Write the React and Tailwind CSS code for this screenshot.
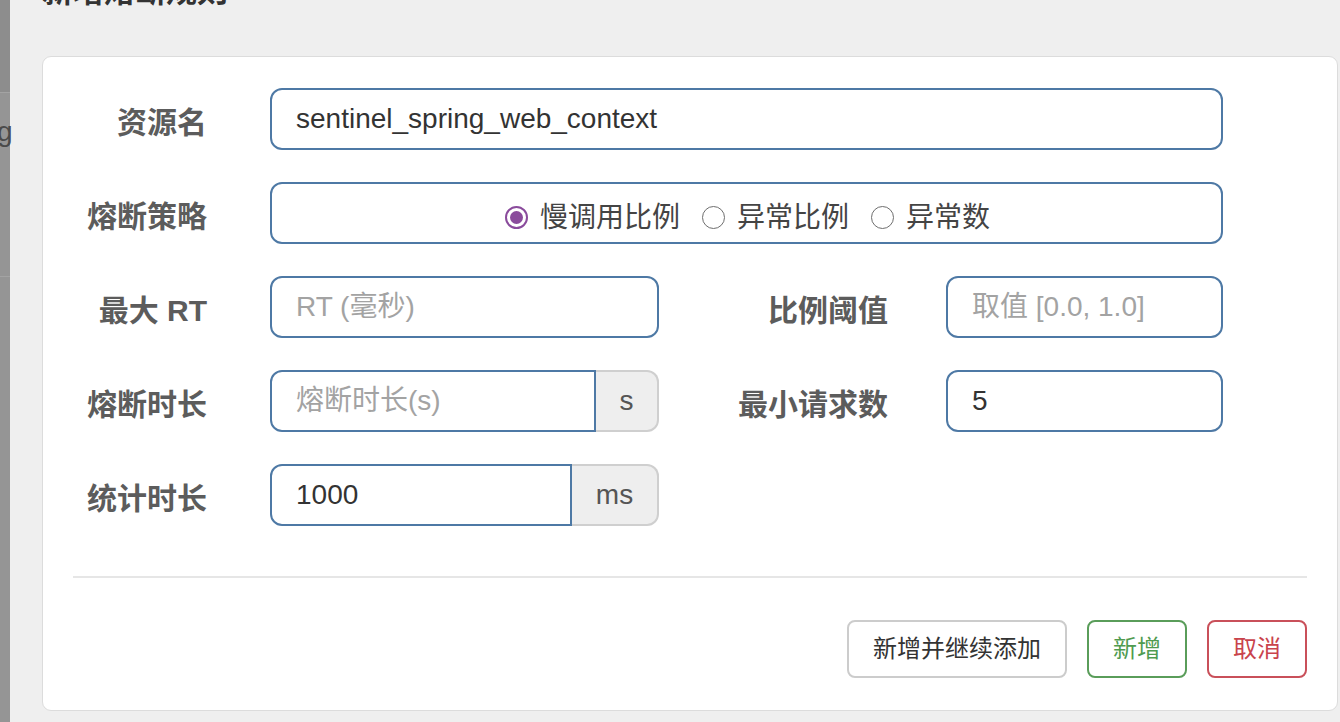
import { useState } from 'react';

const FONT = "font-['Liberation_Sans','Noto_Sans_CJK_SC',sans-serif]";

function Label({ children, className = '' }) {
  return (
    <div className={`pt-[8px] text-right text-[30px] font-bold leading-none text-[#5c5c5c] ${className}`}>
      {children}
    </div>
  );
}

function TextInput({ placeholder, value, className = '', addon, addonWidth = '' }) {
  if (addon) {
    return (
      <div className={`flex h-[62px] ${className}`}>
        <input
          defaultValue={value}
          placeholder={placeholder}
          className="h-full min-w-0 flex-1 rounded-l-[12px] border-2 border-[#4e79a5] bg-white pl-[24px] text-[28px] text-[#333] outline-none placeholder:text-[#a3a3a3]"
        />
        <div className={`flex h-full items-center justify-center rounded-r-[12px] border-2 border-l-0 border-[#cfcfcf] bg-[#eeeeee] text-[28px] text-[#555] ${addonWidth}`}>
          {addon}
        </div>
      </div>
    );
  }
  return (
    <input
      defaultValue={value}
      placeholder={placeholder}
      className={`h-[62px] rounded-[12px] border-2 border-[#4e79a5] bg-white pl-[24px] text-[28px] text-[#333] outline-none placeholder:text-[#a3a3a3] ${className}`}
    />
  );
}

function Radio({ checked, label, onClick }) {
  return (
    <label className="flex cursor-pointer items-center gap-[12px]" onClick={onClick}>
      {checked ? (
        <span className="flex h-[23px] w-[23px] items-center justify-center rounded-full border-2 border-[#8a4b9c] bg-white">
          <span className="h-[13px] w-[13px] rounded-full bg-[#8a4b9c]" />
        </span>
      ) : (
        <span className="h-[23px] w-[23px] rounded-full border-[1.5px] border-[#6e6e6e] bg-white" />
      )}
      <span className="text-[28px] leading-none text-[#444]">{label}</span>
    </label>
  );
}

export default function App() {
  const [strategy, setStrategy] = useState(0);
  const options = ['慢调用比例', '异常比例', '异常数'];

  return (
    <div className={`flex h-[722px] w-full overflow-hidden bg-[#efefef] ${FONT}`}>
      {/* page behind the modal */}
      <div className="flex w-[10px] shrink-0 flex-col bg-[#8d8d8d]">
        <div className="h-[93px] border-b border-[#a3a3a3]" />
        <div className="relative h-[184px] border-b border-[#a3a3a3] bg-[#959595]">
          <span className="absolute left-[-3px] top-[18px] text-[28px] text-[#4a4a4a]">g</span>
        </div>
        <div className="flex-1 bg-[#959595]" />
      </div>

      <div className="flex-1 pl-[32px]">
        <div className="mt-[-24px] h-[48px] text-[31px] font-bold leading-none text-[#333]">新增熔断规则</div>

        <div className="mt-[32px] w-[1296px] rounded-[9px] border border-[#dcdcdc] bg-white pb-[32px]">
          <div className="flex flex-col gap-[32px] pt-[31px]">
            <div className="flex items-center">
              <Label className="w-[164px]">资源名</Label>
              <TextInput value="sentinel_spring_web_context" className="ml-[63px] w-[953px]" />
            </div>

            <div className="flex items-center">
              <Label className="w-[164px]">熔断策略</Label>
              <div className="ml-[63px] flex h-[62px] w-[953px] items-center justify-center gap-[22px] rounded-[12px] border-2 border-[#4e79a5] pt-[9px] pl-[2px]">
                {options.map((o, i) => (
                  <Radio key={o} label={o} checked={strategy === i} onClick={() => setStrategy(i)} />
                ))}
              </div>
            </div>

            <div className="flex items-center">
              <Label className="w-[164px]">最大 RT</Label>
              <TextInput placeholder="RT (毫秒)" className="ml-[63px] w-[389px]" />
              <Label className="w-[229px]">比例阈值</Label>
              <TextInput placeholder="取值 [0.0, 1.0]" className="ml-[58px] w-[277px]" />
            </div>

            <div className="flex items-center">
              <Label className="w-[164px]">熔断时长</Label>
              <TextInput placeholder="熔断时长(s)" addon="s" addonWidth="w-[63px]" className="ml-[63px] w-[389px]" />
              <Label className="w-[229px]">最小请求数</Label>
              <TextInput value="5" className="ml-[58px] w-[277px]" />
            </div>

            <div className="flex items-center">
              <Label className="w-[164px]">统计时长</Label>
              <TextInput value="1000" addon="ms" addonWidth="w-[87px]" className="ml-[63px] w-[389px]" />
            </div>
          </div>

          <div className="mx-[30px] mt-[50px] border-t-2 border-[#e6e6e6]" />

          <div className="mx-[30px] mt-[42px] flex justify-end gap-[20px]">
            <button className="h-[58px] rounded-[8px] border-2 border-[#cccccc] bg-white px-[24px] text-[24px] text-[#333]">
              新增并继续添加
            </button>
            <button className="h-[58px] rounded-[8px] border-2 border-[#5a9d5a] bg-white px-[24px] text-[24px] text-[#4f9b4f]">
              新增
            </button>
            <button className="h-[58px] rounded-[8px] border-2 border-[#c9505a] bg-white px-[24px] text-[24px] text-[#c9434c]">
              取消
            </button>
          </div>
        </div>
      </div>
    </div>
  );
}
